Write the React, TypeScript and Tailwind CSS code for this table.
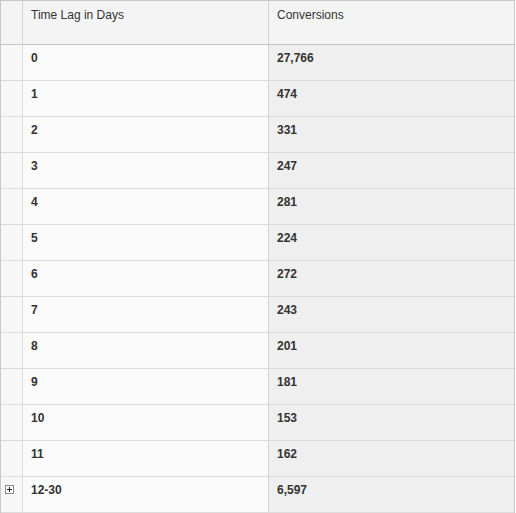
import React from "react";

const rows: [string, string][] = [
  ["0", "27,766"],
  ["1", "474"],
  ["2", "331"],
  ["3", "247"],
  ["4", "281"],
  ["5", "224"],
  ["6", "272"],
  ["7", "243"],
  ["8", "201"],
  ["9", "181"],
  ["10", "153"],
  ["11", "162"],
  ["12-30", "6,597"],
];

export default function App() {
  return (
    <div
      className="w-[516px] h-[513px] bg-white text-[12px] text-[#333]"
      style={{ fontFamily: '"Liberation Sans", Arial, sans-serif' }}
    >
      <div className="w-[515px] border border-[#c8c8c8] border-b-0">
        <div className="flex h-[44px] bg-[#f4f4f4] border-b border-[#c4c4c4]">
          <div className="w-[22px] border-r border-[#d4d4d4]" />
          <div className="w-[246px] border-r border-[#d4d4d4] pl-2 pt-[7px] leading-[14px]">
            Time Lag in Days
          </div>
          <div className="flex-1 pl-2 pt-[7px] leading-[14px]">Conversions</div>
        </div>
        {rows.map(([d, c], i) => (
          <div key={d} className="flex h-[36px] border-b border-[#dcdcdc] font-bold">
            <div className="w-[22px] border-r border-[#dcdcdc] bg-[#f7f7f7] flex justify-start pl-[4px] pt-[8px]">
              {i === rows.length - 1 && (
                <svg width="9" height="9" viewBox="0 0 9 9">
                  <rect x="0.5" y="0.5" width="8" height="8" fill="#fff" stroke="#8a8a8a" />
                  <path d="M2 4.5H7M4.5 2V7" stroke="#222" strokeWidth="1" />
                </svg>
              )}
            </div>
            <div className="w-[246px] border-r border-[#d4d4d4] bg-[#fafafa] pl-2 pt-[6px] leading-[14px]">
              {d}
            </div>
            <div className="flex-1 bg-[#efefef] pl-2 pt-[6px] leading-[14px]">{c}</div>
          </div>
        ))}
      </div>
    </div>
  );
}
